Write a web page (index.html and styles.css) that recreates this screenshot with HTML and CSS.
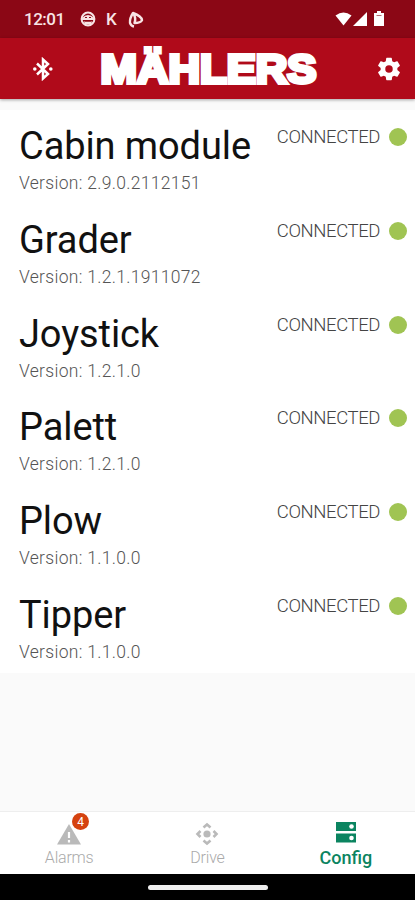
FILE: index.html
```html
<!DOCTYPE html>
<html lang="en">
<head>
    <meta charset="UTF-8">
    <meta name="viewport" content="width=device-width, initial-scale=1.0">
    <title>Mählers Config</title>
    <link rel="stylesheet" href="styles.css">
</head>
<body>

    <div class="status-bar">
        <span class="clock">12:01</span>
        <svg class="status-face" width="16" height="16" viewBox="0 0 16 16">
            <circle cx="8" cy="8" r="6.4" fill="none" stroke="#f8e4e5" stroke-width="2"/>
            <path d="M2 7Q8 1 14 7V9H2zM4 10.500h8l-1 3H5z" fill="#f8e4e5"/>
            <path d="M5 6.500h2M9 6.500h2M5 10h6" stroke="#8b0715" stroke-width="1.2"/>
        </svg>
        <span class="status-letter">K</span>
        <svg class="status-app" width="16" height="17" viewBox="0 0 16 17">
            <path d="M5 2Q13.500 5 14 9.200Q12.500 12 6.500 12Q8.500 7 5 2Q1.500 7.500 2 11.800Q3 15 6 15.500" fill="none" stroke="#f8e4e5" stroke-width="2.400" stroke-linejoin="round"/>
        </svg>
        <svg class="status-signals" width="50" height="16" viewBox="0 0 50 16">
            <path d="M.5 4.5Q8.500-1.500 16.500 4.500L8.500 14.500z" fill="#fff"/>
            <path d="M32 1v14H18z" fill="#fff"/>
            <path d="M42 0h4v2h3v13H39V2h3z" fill="#fff"/>
            <path d="M41.500 4.500h5" stroke="#b76c73"/>
        </svg>
    </div>

    <header class="app-bar">
        <svg class="bluetooth" width="22" height="24" viewBox="0 0 22 24">
            <path d="M5 6.500L16 17L11 21.500V2.500L16 7L5 17.500" fill="none" stroke="#fff" stroke-width="2.500"/>
            <circle cx="2.800" cy="12" r="1.800" fill="#fff"/>
            <circle cx="18.800" cy="12" r="1.800" fill="#fff"/>
        </svg>
        <svg class="logo" width="222" height="56" viewBox="0 0 222 56">
            <text x="1.500" y="42" textLength="216" lengthAdjust="spacingAndGlyphs">MÄHLERS</text>
        </svg>
        <svg class="gear" width="28" height="28" viewBox="0 0 24 24">
            <path fill="#fff" d="M19.140 12.940c.04-.3.060-.61.060-.94 0-.32-.02-.64-.07-.94l2.030-1.580c.18-.14.230-.41.120-.61l-1.920-3.320c-.12-.22-.37-.29-.59-.22l-2.390.96c-.5-.38-1.030-.7-1.620-.94l-.36-2.540c-.04-.24-.24-.41-.48-.41h-3.840c-.24 0-.43.170-.47.410l-.36 2.540c-.59.240-1.130.570-1.620.940l-2.390-.96c-.22-.08-.47 0-.59.220L2.740 8.870c-.12.210-.08.470.120.610l2.030 1.580c-.05.300-.09.630-.09.940s.02.640.070.940l-2.030 1.580c-.18.140-.23.410-.12.610l1.920 3.320c.12.220.370.290.590.220l2.390-.96c.5.380 1.030.700 1.620.940l.36 2.540c.05.240.240.410.480.410h3.840c.24 0 .44-.17.470-.41l.36-2.540c.59-.24 1.130-.56 1.620-.94l2.390.96c.22.080.470 0 .59-.22l1.920-3.320c.12-.22.070-.47-.12-.61l-2.010-1.580zM12 15.200A3.200 3.200 0 1 1 12 8.800A3.200 3.200 0 1 1 12 15.200z"/>
        </svg>
    </header>

    <main class="content">
        <ul class="module-list">
            <li class="module">
                <div>
                    <h2>Cabin module</h2>
                    <p>Version: 2.9.0.2112151</p>
                </div>
                <div class="state"><span>CONNECTED</span><i class="dot"></i></div>
            </li>
            <li class="module">
                <div>
                    <h2>Grader</h2>
                    <p>Version: 1.2.1.1911072</p>
                </div>
                <div class="state"><span>CONNECTED</span><i class="dot"></i></div>
            </li>
            <li class="module">
                <div>
                    <h2>Joystick</h2>
                    <p>Version: 1.2.1.0</p>
                </div>
                <div class="state"><span>CONNECTED</span><i class="dot"></i></div>
            </li>
            <li class="module">
                <div>
                    <h2>Palett</h2>
                    <p>Version: 1.2.1.0</p>
                </div>
                <div class="state"><span>CONNECTED</span><i class="dot"></i></div>
            </li>
            <li class="module">
                <div>
                    <h2>Plow</h2>
                    <p>Version: 1.1.0.0</p>
                </div>
                <div class="state"><span>CONNECTED</span><i class="dot"></i></div>
            </li>
            <li class="module">
                <div>
                    <h2>Tipper</h2>
                    <p>Version: 1.1.0.0</p>
                </div>
                <div class="state"><span>CONNECTED</span><i class="dot"></i></div>
            </li>
        </ul>
    </main>

    <nav class="tabs">
        <a class="tab">
            <svg width="28" height="28" viewBox="0 0 28 28">
                <path d="M14 4L26 24.500H2z" fill="#bababa"/>
                <path d="M14 12v6M14 20v2.500" stroke="#fff" stroke-width="2.200"/>
            </svg>
            <span class="badge">4</span>
            <span>Alarms</span>
        </a>
        <a class="tab">
            <svg width="28" height="28" viewBox="0 0 28 28">
                <circle cx="14" cy="14" r="3.600" fill="#bababa"/>
                <path d="M10.500 7.500L14 4.500L17.500 7.500M10.500 20.500L14 23.500L17.500 20.500M7.500 11L4.500 14L7.500 17M20.500 11L23.500 14L20.500 17" fill="none" stroke="#bababa" stroke-width="2.600"/>
            </svg>
            <span>Drive</span>
        </a>
        <a class="tab active">
            <svg width="28" height="28" viewBox="0 0 28 28">
                <path d="M4 2h20v9H4zM4 13.500h20v9H4z" fill="#0b8460"/>
                <circle cx="19.500" cy="6.500" r="2.300" fill="#fff"/>
                <circle cx="19.500" cy="18" r="2.300" fill="#fff"/>
            </svg>
            <span>Config</span>
        </a>
    </nav>

    <div class="gesture-bar"><div class="handle"></div></div>

</body>
</html>
```
FILE: styles.css
```css
* {
    box-sizing: border-box;
}
body {
    margin: 0;
    height: 900px;
    display: flex;
    flex-direction: column;
    font-family: Roboto, sans-serif;
    background-color: #fafafa;
    overflow: hidden;
}
svg {
    display: block;
    flex: none;
}

/* Android status bar */
.status-bar {
    height: 38px;
    flex: none;
    display: flex;
    align-items: center;
    padding: 0 29px 0 24px;
    background-color: #8b0715;
    color: #f8e4e5;
}
.clock {
    width: 56px;
    font-size: 17px;
    font-weight: 500;
    letter-spacing: -0.5px;
}
.status-letter {
    width: 22px;
    padding-left: 10px;
    font-size: 17px;
    font-weight: 500;
}
.status-app {
    margin-left: 10px;
}
.status-signals {
    margin-left: auto;
    margin-right: 1px;
    margin-top: -1px;
}

.app-bar {
    height: 61px;
    flex: none;
    display: flex;
    align-items: center;
    padding: 0 12px 0 32px;
    background-color: #b00a1a;
    box-shadow: 0 1px 3px rgba(0, 0, 0, 0.35);
}
.logo {
    margin-left: 45px;
}
.logo text {
    font-family: "Liberation Sans", sans-serif;
    font-size: 41.5px;
    font-weight: 700;
    fill: #fff;
    stroke: #fff;
    stroke-width: 4px;
}
.gear {
    margin-left: auto;
}

.content {
    flex: 1;
    min-height: 0;
    padding-top: 11px;
}
.module-list {
    margin: 0;
    padding: 0;
    list-style: none;
    background-color: #fff;
}
.module {
    height: 93.75px;
    display: flex;
    justify-content: space-between;
    padding: 13px 8px 0 19px;
}
.module h2 {
    margin: 0;
    font-size: 38px;
    font-weight: 400;
    line-height: 46px;
    letter-spacing: -0.1px;
    color: #111;
    white-space: nowrap;
}
.module p {
    margin: 4px 0 0;
    font-size: 17.5px;
    font-weight: 300;
    line-height: 21px;
    letter-spacing: 0.3px;
    color: #555;
}
.state {
    height: 28px;
    display: flex;
    align-items: center;
    gap: 9px;
    font-size: 18.5px;
    font-weight: 300;
    letter-spacing: -0.4px;
    color: #444;
}
.dot {
    width: 18px;
    height: 18px;
    border-radius: 50%;
    background-color: #a0c453;
}

/* Bottom navigation */
.tabs {
    height: 63px;
    flex: none;
    display: flex;
    background-color: #fff;
    border-top: 1px solid #eee;
}
.tab {
    position: relative;
    flex: 1;
    display: flex;
    flex-direction: column;
    align-items: center;
    padding-top: 8px;
    font-size: 16px;
    font-weight: 300;
    line-height: 20px;
    letter-spacing: -0.2px;
    color: #aaa;
}
.tab.active {
    font-size: 18px;
    font-weight: 500;
    letter-spacing: 0;
    color: #0b8460;
}
.badge {
    position: absolute;
    top: 1px;
    left: 72px;
    width: 17px;
    height: 17px;
    border-radius: 50%;
    background-color: #d5420f;
    color: #fff;
    font-size: 12px;
    font-weight: 400;
    line-height: 18px;
    text-align: center;
}
.gesture-bar {
    height: 26px;
    flex: none;
    display: flex;
    align-items: center;
    justify-content: center;
    background-color: #000;
}
.handle {
    width: 120px;
    height: 5px;
    border-radius: 3px;
    background-color: #eee;
}
```
